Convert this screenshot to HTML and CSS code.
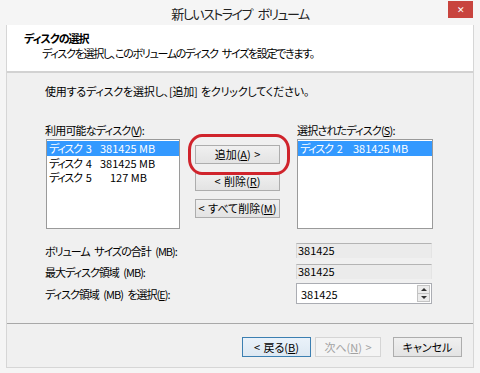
FILE: index.html
```html
<!DOCTYPE html>
<html lang="ja">
<head>
  <meta charset="UTF-8">
  <title>新しいストライプ ボリューム</title>
  <link rel="stylesheet" href="styles.css">
</head>
<body>
  <div class="window">
    <div class="titlebar">
      <span></span>
      <div class="title">新しいストライプ ボリューム</div>
      <div class="close">&#x2715;</div>
    </div>
    <div class="dialog">
      <div class="header">
        <div class="header-title">ディスクの選択</div>
        <div class="header-sub">ディスクを選択し、このボリュームのディスク サイズを設定できます。</div>
      </div>
      <div class="content">
        <p class="intro">使用するディスクを選択し、[追加] をクリックしてください。</p>
        <div class="picker">
          <div class="col-left">
            <div class="label">利用可能なディスク(<u>V</u>):</div>
            <div class="listbox">
              <div class="item selected"><span class="name">ディスク 3</span><span>381425 MB</span></div>
              <div class="item"><span class="name">ディスク 4</span><span>381425 MB</span></div>
              <div class="item"><span class="name">ディスク 5</span><span class="pad">127 MB</span></div>
            </div>
          </div>
          <div class="col-buttons">
            <div class="mark"><button class="btn">追加(<u>A</u>) &gt;</button></div>
            <button class="btn">&lt; 削除(<u>R</u>)</button>
            <button class="btn">&lt; すべて削除(<u>M</u>)</button>
          </div>
          <div class="col-right">
            <div class="label">選択されたディスク(<u>S</u>):</div>
            <div class="listbox">
              <div class="item selected"><span class="name wide">ディスク 2</span><span>381425 MB</span></div>
            </div>
          </div>
        </div>
        <div class="fields">
          <div class="field-row">
            <span class="field-label">ボリューム サイズの合計 (MB):</span>
            <div class="readonly">381425</div>
          </div>
          <div class="field-row">
            <span class="field-label">最大ディスク領域 (MB):</span>
            <div class="readonly">381425</div>
          </div>
          <div class="field-row spin-row">
            <span class="field-label">ディスク領域 (MB) を選択(<u>E</u>):</span>
            <div class="spinbox">
              <span class="spin-value">381425</span>
              <div class="spin-buttons">
                <div class="spin-up"></div>
                <div class="spin-down"></div>
              </div>
            </div>
          </div>
        </div>
      </div>
      <div class="footer">
        <button class="btn btn-default">&lt; 戻る(<u>B</u>)</button>
        <button class="btn btn-disabled">次へ(<u>N</u>) &gt;</button>
        <button class="btn btn-cancel">キャンセル</button>
      </div>
    </div>
  </div>
</body>
</html>
```

FILE: styles.css
```css
* {
  box-sizing: border-box;
}

body {
  margin: 0;
  font-family: "Noto Sans CJK JP", "Noto Sans", sans-serif;
  font-size: 11px;
  font-feature-settings: "palt";
  color: #000;
  background: #f4f4f4;
}

.window {
  width: 480px;
  height: 373px;
  background: #f5f5f5;
  display: flex;
  flex-direction: column;
}

.titlebar {
  height: 25px;
  display: grid;
  grid-template-columns: 1fr auto 1fr;
  align-items: start;
}

.title {
  font-size: 13px;
  line-height: 16px;
  letter-spacing: -1.5px;
  word-spacing: 4px;
  padding-top: 6px;
  color: #222;
}

.close {
  justify-self: end;
  width: 25px;
  height: 17px;
  margin: 1px 7px 0 0;
  background: #c8443e;
  color: #fff;
  font-size: 9px;
  line-height: 17px;
  text-align: center;
}

.dialog {
  flex: 1;
  margin: 0 6px 5px 6px;
  border: 1px solid #d6d6d6;
  border-top: none;
  background: #f0f0f0;
  display: flex;
  flex-direction: column;
}

.header {
  height: 48px;
  background: #fff;
  border-bottom: 2px solid #d2d2d2;
  padding: 6px 0 0 17px;
  line-height: 14px;
}

.header-title {
  font-weight: bold;
  letter-spacing: -1px;
}

.header-sub {
  margin-top: 1px;
  padding-left: 18px;
  letter-spacing: -1.3px;
  word-spacing: 3px;
}

.content {
  height: 251px;
  border-bottom: 1px solid #a8a8a8;
  padding: 11px 0 0 38px;
  line-height: 14px;
}

.intro {
  margin: 0;
  letter-spacing: -0.2px;
  word-spacing: 1px;
}

.label {
  letter-spacing: -0.8px;
}

.picker {
  display: flex;
  margin-top: 25px;
}

.col-left {
  width: 135px;
}

.col-left .listbox {
  margin-left: 1px;
  width: 134px;
}

.listbox {
  margin-top: 2px;
  height: 90px;
  background: #fff;
  border: 1px solid #9a9a9a;
  padding: 1px 0 0 0;
}

.item {
  display: flex;
  height: 14.5px;
  line-height: 14.5px;
  padding-left: 2px;
}

.item.selected {
  background: #3399ff;
  color: #fff;
}

.name {
  width: 51px;
  letter-spacing: -1.3px;
  word-spacing: 3px;
}

.name.wide {
  width: 53px;
}

.pad {
  padding-left: 10px;
}

.col-buttons {
  width: 85px;
  margin-left: 15px;
  padding-top: 22px;
  display: flex;
  flex-direction: column;
  gap: 8px;
}

.col-right {
  width: 136px;
  margin-left: 17px;
}

.btn {
  display: block;
  width: 85px;
  height: 19px;
  padding: 0;
  font-family: inherit;
  font-size: 11px;
  font-feature-settings: "palt";
  word-spacing: 1px;
  line-height: 17px;
  color: #000;
  background: linear-gradient(#f0f0f0, #e3e3e3);
  border: 1px solid #adadad;
}

.mark {
  position: relative;
}

.mark::after {
  content: "";
  position: absolute;
  top: -11px;
  left: -7px;
  right: -10px;
  bottom: -11px;
  border: 3px solid #d0242c;
  border-radius: 14px / 16px;
}

.fields {
  margin-top: 14px;
}

.field-row {
  display: grid;
  grid-template-columns: 251px 136px;
  align-items: center;
  height: 15px;
  margin-bottom: 6px;
}

.field-row:nth-child(2) {
  margin-bottom: 4px;
}

.field-label {
  letter-spacing: -1px;
  word-spacing: 3px;
}

.spin-row {
  height: 21px;
}

.readonly {
  height: 15px;
  background: #ebebeb;
  border-top: 1px solid #b4b4b4;
  border-left: 1px solid #d8d8d8;
  border-right: 1px solid #e4e4e4;
  line-height: 13px;
  padding-left: 1px;
}

.spinbox {
  height: 21px;
  display: flex;
  align-items: center;
  background: #fff;
  border: 1px solid #abadb3;
  padding-left: 4px;
}

.spin-value {
  flex: 1;
}

.spin-buttons {
  width: 13px;
  height: 17px;
  margin-right: 1px;
  display: flex;
  flex-direction: column;
  border: 1px solid #c3c3c3;
  background: #ececec;
}

.spin-up,
.spin-down {
  flex: 1;
  display: flex;
  align-items: center;
  justify-content: center;
}

.spin-up {
  border-bottom: 1px solid #c3c3c3;
}

.spin-up::before {
  content: "";
  border-left: 3px solid transparent;
  border-right: 3px solid transparent;
  border-bottom: 3px solid #333;
}

.spin-down::before {
  content: "";
  border-left: 3px solid transparent;
  border-right: 3px solid transparent;
  border-top: 3px solid #333;
}

.footer {
  flex: 1;
  display: flex;
  justify-content: flex-end;
  align-items: flex-start;
  padding: 13px 11px 0 0;
}

.footer .btn {
  height: 20px;
  line-height: 18px;
}

.btn-default {
  width: 69px;
  border-color: #3c7fb1;
  background: linear-gradient(#eaf2fa, #dde8f2);
}

.btn-disabled {
  width: 66px;
  margin-left: 4px;
  color: #a2a2a2;
  border-color: #d5d5d5;
  background: #f4f4f4;
}

.btn-cancel {
  width: 69px;
  margin-left: 12px;
}
```
